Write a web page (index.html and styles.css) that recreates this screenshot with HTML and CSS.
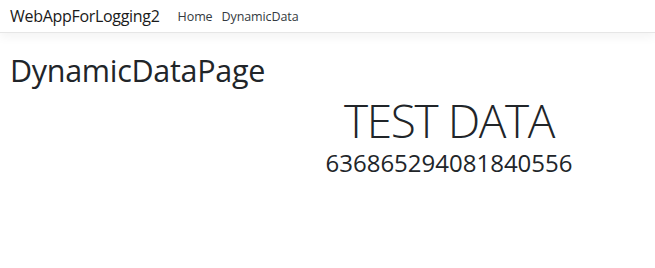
FILE: index.html
```html
<!DOCTYPE html>
<html lang="en">
<head>
<meta charset="utf-8">
<title>DynamicDataPage</title>
<link rel="stylesheet" href="styles.css">
</head>
<body>
<header class="navbar">
  <a class="brand" href="#">WebAppForLogging2</a>
  <nav class="nav">
    <a class="nav-link" href="#">Home</a>
    <a class="nav-link" href="#">DynamicData</a>
  </nav>
</header>
<main class="container">
  <h1 class="page-title">DynamicDataPage</h1>
  <div class="data">
    <div class="display">TEST DATA</div>
    <div class="value">636865294081840556</div>
  </div>
</main>
</body>
</html>
```
FILE: styles.css
```css
* { box-sizing: border-box; }
html, body { margin: 0; padding: 0; }
body {
  font-family: "Open Sans", "Noto Sans", "Liberation Sans", sans-serif;
  color: #212529;
  background: #fff;
  width: 655px;
  height: 268px;
  overflow: hidden;
}
a { text-decoration: none; }
.navbar {
  display: flex;
  align-items: center;
  height: 33px;
  padding: 0 10px;
  border-bottom: 1px solid #e6e6e6;
  box-shadow: 0 4px 10px rgba(0,0,0,0.05);
  background: #fff;
}
.brand {
  font-size: 16px;
  color: #1a1a1a;
  margin-right: 18px;
  letter-spacing: -0.3px;
}
.nav { display: flex; gap: 9px; }
.nav-link {
  font-size: 12.5px;
  color: #343a40;
  letter-spacing: -0.1px;
}
.container { padding: 0 10px; }
.page-title {
  font-size: 30.5px;
  font-weight: 400;
  margin: 19px 0 0;
  line-height: 1.2;
  letter-spacing: -0.3px;
}
.data {
  padding-left: 243px;
  text-align: center;
}
.display {
  font-size: 46px;
  font-weight: 300;
  line-height: 1.15;
  letter-spacing: -1.4px;
  margin-top: 5px;
}
.value {
  font-size: 24px;
  line-height: 1.4;
  margin-top: 0;
}
```
